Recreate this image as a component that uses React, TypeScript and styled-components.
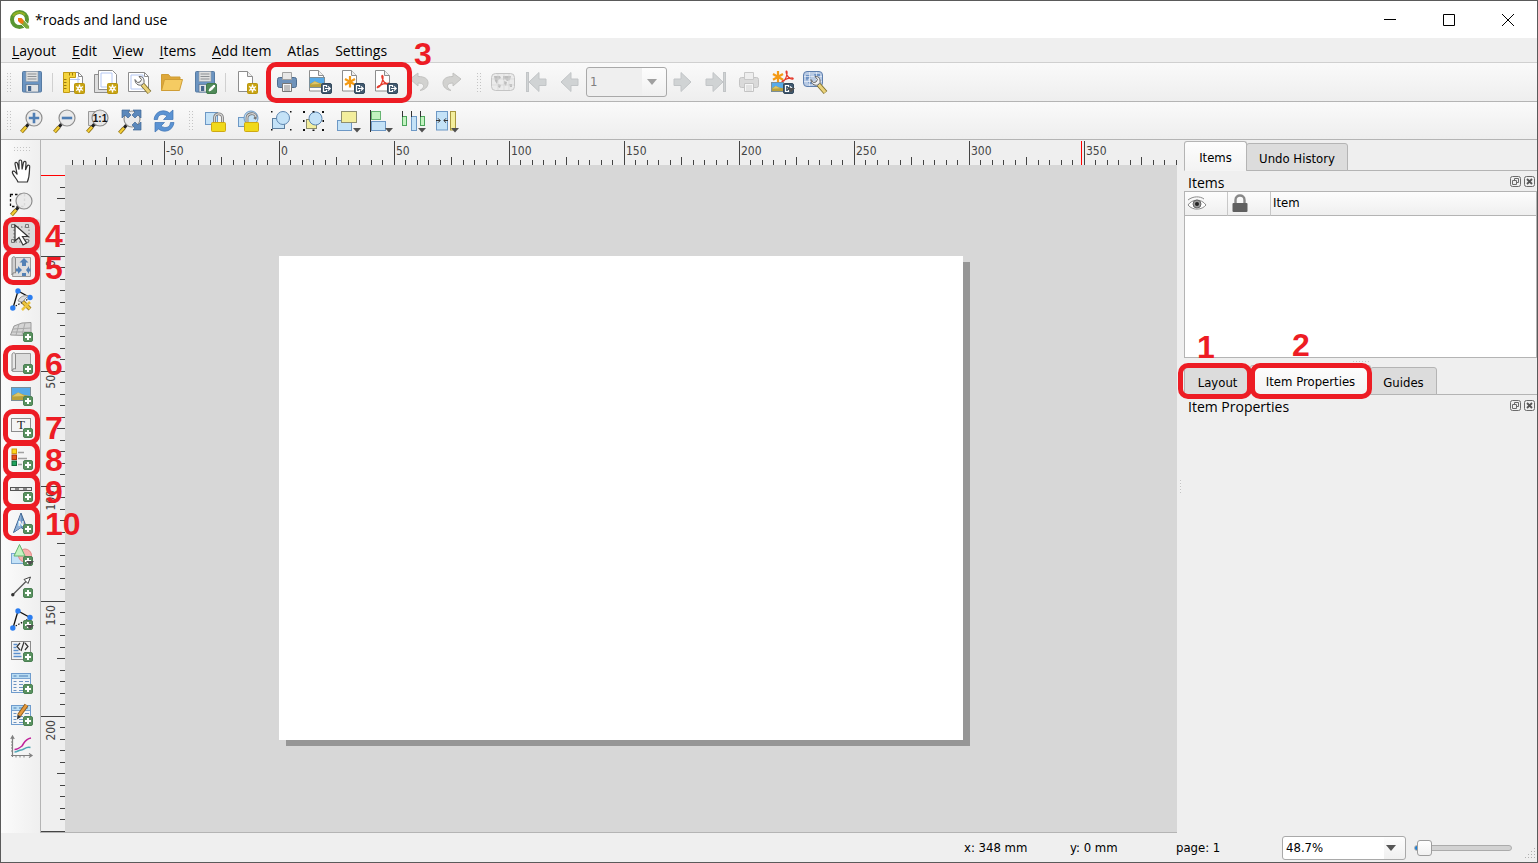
import React, { useLayoutEffect, useRef, useState } from "react";
import styled, { createGlobalStyle, css } from "styled-components";

const UI = `"Open Sans", "Noto Sans", sans-serif`;
const SMALL = `"DejaVu Sans Condensed", "DejaVu Sans", sans-serif`;
const RED = "#ed1c24";
const LINE = "#b4b4b4";

const Global = createGlobalStyle`
  *, *::before, *::after { box-sizing: border-box; }
  body { margin: 0; background: #efefef; color: #000; font-family: ${UI}; font-size: 14px; }
  button, select, input { font: inherit; color: inherit; margin: 0; }
`;

/* ---------- window frame ---------- */

const Window = styled.div`
  display: flex;
  flex-direction: column;
  height: 100vh;
  min-height: 800px;
  border: 1px solid #5a5a5a;
  background: #efefef;
  overflow: hidden;
`;

const TitleBar = styled.header`
  display: flex;
  align-items: center;
  flex: none;
  height: 37px;
  padding-left: 9px;
  background: #fff;
`;

const Title = styled.h1`
  flex: 1;
  margin: 0 0 0 5px;
  font-size: 14px;
  font-weight: 400;
  line-height: 20px;
`;

const CaptionButton = styled.button`
  display: grid;
  place-items: center;
  width: 59px;
  height: 36px;
  padding: 0;
  border: 0;
  background: transparent;
`;

const MenuBar = styled.nav`
  display: flex;
  align-items: center;
  flex: none;
  gap: 16px;
  height: 25px;
  padding: 2px 0 0 11px;
  border-bottom: 1px solid #d0d0d0;
`;

const MenuButton = styled.button`
  padding: 0;
  border: 0;
  background: transparent;
  line-height: 20px;
`;

const Mnemonic = styled.span`
  text-decoration: underline;
  text-underline-offset: 2px;
`;

/* ---------- toolbars ---------- */

const Toolbar = styled.div<{ $height: number }>`
  display: flex;
  align-items: center;
  flex: none;
  height: ${(p) => p.$height}px;
  border-bottom: 1px solid ${LINE};
  background: linear-gradient(#fafafa, #eeeeee);
`;

const dots = css`
  background-image: linear-gradient(#f4f4f4 2px, transparent 2px), linear-gradient(90deg, #c4c4c4 1px, transparent 1px);
  background-position: 0 1px, 0 0;
  background-size: 3px 3px;
`;

const Handle = styled.span<{ $first?: boolean }>`
  flex: none;
  width: ${(p) => (p.$first ? 4 : 5)}px;
  height: 19px;
  margin: ${(p) => (p.$first ? "0 5px 0 6px" : "0 5px 0 8px")};
  ${dots}
`;

const Separator = styled.span`
  flex: none;
  width: 1px;
  height: 19px;
  margin: 0 4px 0 3px;
  background: #d0d0d0;
`;

const ToolButton = styled.button<{ $vertical?: boolean; $pressed?: boolean }>`
  position: relative;
  display: flex;
  align-items: center;
  flex: none;
  width: ${(p) => (p.$vertical ? 36 : 33)}px;
  height: ${(p) => (p.$vertical ? 32 : 34)}px;
  padding: 0 0 0 ${(p) => (p.$vertical ? 6 : 4)}px;
  border: 0;
  border-radius: 3px;
  background: ${(p) => (p.$pressed ? "#dadada" : "transparent")};
`;

const Svg = styled.svg`
  display: block;
  flex: none;
  overflow: visible;
`;

const MarkedGroup = styled.div`
  position: relative;
  display: flex;
`;

const Ring = styled.span<{ $x: number; $y: number; $w: number; $h: number }>`
  position: absolute;
  z-index: 3;
  left: ${(p) => p.$x}px;
  top: ${(p) => p.$y}px;
  width: ${(p) => p.$w}px;
  height: ${(p) => p.$h}px;
  border: 5px solid ${RED};
  border-radius: 10px;
  pointer-events: none;
`;

const Digit = styled.span<{ $x: number; $y: number }>`
  position: absolute;
  z-index: 4;
  left: ${(p) => p.$x}px;
  top: ${(p) => p.$y}px;
  color: ${RED};
  font: 700 32px/32px "Liberation Sans", Arial, sans-serif;
  pointer-events: none;
`;

const Combo = styled.span<{ $width: number; $height: number }>`
  position: relative;
  display: flex;
  flex: none;
  width: ${(p) => p.$width}px;
  height: ${(p) => p.$height}px;
`;

const Select = styled.select<{ $fill: string; $arrow: number }>`
  appearance: none;
  width: 100%;
  padding: 0 0 0 3px;
  border: 1px solid #a9a9a9;
  border-radius: 3px;
  background: linear-gradient(90deg, ${(p) => p.$fill}, ${(p) => p.$fill}) no-repeat left / calc(100% - ${(p) => p.$arrow}px) 100%,
    linear-gradient(#fdfdfd, #f0f0f0);
  font: 13px/16px ${SMALL};
  opacity: 1;
  &:disabled { color: #808080; }
`;

const ComboArrow = styled.svg`
  position: absolute;
  right: 10px;
  top: calc(50% - 3px);
  pointer-events: none;
`;

/* ---------- work area ---------- */

const Work = styled.div`
  display: flex;
  flex: 1;
  min-height: 0;
`;

const SideBar = styled.div`
  position: relative;
  z-index: 2;
  display: flex;
  flex-direction: column;
  flex: none;
  width: 40px;
  padding: 7px 0 0 3px;
  border-right: 1px solid ${LINE};
  background: linear-gradient(90deg, #fbfbfb, #efefef);
`;

const SideHandle = styled.span`
  width: 16px;
  height: 4px;
  margin: 0 0 4px 10px;
  ${dots}
`;

const Center = styled.main`
  display: grid;
  flex: 1;
  min-width: 0;
  grid-template: 25px 1fr / 24px 1fr;
  border-bottom: 1px solid ${LINE};
`;

const RulerBox = styled.div<{ $across?: boolean }>`
  grid-column: ${(p) => (p.$across ? "1 / 3" : "1")};
  overflow: hidden;
  min-height: 0;
`;

const RulerSvg = styled.svg`
  display: block;
  width: 100%;
  height: 100%;
  font: 12px ${SMALL};
  fill: #444;
  shape-rendering: crispEdges;
`;

const Canvas = styled.section`
  min-width: 0;
  padding: 91px 0 0 214px;
  background: #d7d7d7;
  overflow: hidden;
`;

const Paper = styled.div`
  width: 684px;
  height: 484px;
  background: #fff;
  box-shadow: 7px 6px 0 #969696;
`;

/* ---------- docks ---------- */

const Gutter = styled.div`
  display: flex;
  align-items: center;
  justify-content: center;
  flex: none;
  width: 7px;
`;

const GutterDots = styled.span`
  width: 1px;
  height: 13px;
  ${dots}
`;

const Docks = styled.aside`
  display: flex;
  flex-direction: column;
  flex: none;
  width: 353px;
  padding-top: 1px;
`;

const TabBar = styled.div`
  display: flex;
  align-items: flex-end;
  flex: none;
  height: 30px;
  border-bottom: 1px solid ${LINE};
`;

const Tab = styled.button<{ $width: number; $active?: boolean }>`
  position: relative;
  flex: none;
  width: ${(p) => p.$width}px;
  height: ${(p) => (p.$active ? 30 : 28)}px;
  margin-bottom: -1px;
  padding: 3px 0 0;
  border: 1px solid ${LINE};
  border-bottom-color: ${(p) => (p.$active ? "#f4f4f4" : LINE)};
  border-radius: 3px 3px 0 0;
  background: ${(p) => (p.$active ? "linear-gradient(#fdfdfd, #f3f3f3)" : "#dcdcdc")};
  font: 13px/16px ${SMALL};
  white-space: nowrap;
  & + & { margin-left: -1px; }
`;

const DockTitle = styled.div`
  display: flex;
  align-items: center;
  flex: none;
  gap: 2px;
  height: 20px;
  padding: 3px 1px 0 4px;
`;

const DockName = styled.h2`
  flex: 1;
  margin: 0;
  font-size: 14px;
  font-weight: 400;
  line-height: 18px;
`;

const DockButton = styled.button`
  width: 12px;
  height: 12px;
  padding: 0;
  margin-bottom: 1px;
  border: 0;
  background: transparent;
`;

const ItemsView = styled.div`
  flex: none;
  height: 167px;
  border: 1px solid ${LINE};
  background: #fff;
`;

const ItemsTable = styled.table`
  width: 100%;
  table-layout: fixed;
  border-collapse: separate;
  border-spacing: 0;
`;

const Th = styled.th<{ $width?: number }>`
  width: ${(p) => (p.$width ? p.$width + "px" : "auto")};
  height: 24px;
  padding: 0 0 2px 2px;
  border-right: ${(p) => (p.$width ? "1px solid #c8c8c8" : "0")};
  border-bottom: 1px solid ${LINE};
  background: linear-gradient(#fdfdfd, #efefef);
  font: 13px/16px ${SMALL};
  text-align: left;
`;

const Splitter = styled.div`
  display: flex;
  justify-content: center;
  align-items: center;
  flex: none;
  height: 7px;
`;

const SplitterDots = styled.span`
  width: 16px;
  height: 1px;
  ${dots}
`;

/* ---------- status bar ---------- */

const StatusBar = styled.footer`
  display: flex;
  align-items: center;
  justify-content: flex-end;
  flex: none;
  height: 29px;
  font: 13px/16px ${SMALL};
`;

const Readout = styled.output`
  width: 106px;
`;

const Slider = styled.input`
  appearance: none;
  width: 98px;
  height: 17px;
  margin: 0 13px 0 8px;
  background: transparent;
  &::-webkit-slider-runnable-track {
    height: 6px;
    border: 1px solid #ababab;
    border-radius: 3px;
    background: linear-gradient(90deg, #1c7fd6 0 6px, #d2d2d2 6px);
  }
  &::-webkit-slider-thumb {
    appearance: none;
    width: 15px;
    height: 16px;
    margin-top: -6px;
    border: 1px solid #9d9d9d;
    border-radius: 3px;
    background: linear-gradient(#fff, #f1f1f1);
  }
`;

const Grip = styled.svg`
  align-self: flex-end;
  margin-bottom: 2px;
`;

/* ---------- shared icon parts ---------- */

const Plus = () => (
  <g>
    <rect x="13.5" y="13.5" width="9" height="9" rx="1.500" fill="#5a9260" stroke="#4b8053" />
    <path d="M18 15v6M15 18h6" stroke="#fff" strokeWidth="2" />
  </g>
);
const Star = () => (
  <g>
    <rect x="13.500" y="13.500" width="10" height="10" rx="1" fill="#c9a412" stroke="#b8950c" />
    <path d="M18.500 14.500v8M15 16.500l7 4M22 16.500l-7 4" stroke="#fff" strokeWidth="1.400" />
    <circle cx="18.500" cy="18.500" r="2.200" fill="#fff" />
    <circle cx="18.500" cy="18.500" r=".8" fill="#c9a412" />
  </g>
);
const Export = () => (
  <g>
    <rect x="13.500" y="13.500" width="10" height="10" rx="1.500" fill="#41596f" stroke="#34495c" />
    <path d="M18.500 15.500h-3v6h3M17 18.500h5M20 16.300l2.200 2.200-2.200 2.200M18.500 15v2M18.500 20v2" fill="none" stroke="#fff" strokeWidth="1.200" />
  </g>
);
const Drop = ({ x = 18, y = 19 }) => <path d={`M${x} ${y}h8l-4 4.500z`} fill="#505050" />;
const Sheet = () => (
  <g>
    <path d="M4.500 1.500h9l5 5v15h-14z" fill="#fff" stroke="#8d8d8d" />
    <path d="M13.500 1.500v5h5" fill="#eee" stroke="#8d8d8d" />
  </g>
);
const ExportSheet = () => (
  <g>
    <path d="M1.500.5h9l5 5v15.500h-14z" fill="#fff" stroke="#8d8d8d" />
    <path d="M10.500.5v5h5" fill="#eee" stroke="#8d8d8d" />
  </g>
);
const Disk = () => (
  <g>
    <rect x="2.500" y="1.500" width="19" height="20.500" rx="1" fill="#6b94c1" stroke="#567ba3" />
    <rect x="6" y="1.500" width="12" height="10" fill="#dfe0e0" stroke="#8f9aa5" strokeWidth=".6" />
    <path d="M7.500 4h9M7.500 6.500h9M7.500 9h9" stroke="#8b8f93" />
    <rect x="6" y="14.500" width="12.500" height="7.500" fill="#e2e4e6" stroke="#59738f" strokeWidth=".7" />
    <rect x="8" y="16" width="3.200" height="5" fill="#46668c" />
  </g>
);
const Lens = ({ cx = 14, cy = 9 }) => (
  <g>
    <path d={`M${cx - 5.500} ${cy + 6}L${cx - 8} ${cy + 9}`} stroke="#222" strokeWidth="3" />
    <path d={`M${cx - 8} ${cy + 9}L${cx - 12.500} ${cy + 14}`} stroke="#8c6d10" strokeWidth="3.800" />
    <path d={`M${cx - 8} ${cy + 9}L${cx - 12.300} ${cy + 13.700}`} stroke="#f2cd35" strokeWidth="2.200" />
    <circle cx={cx} cy={cy} r="8" fill="#e8e8e8" fillOpacity=".93" stroke="#8e8e8e" strokeWidth="1.200" />
  </g>
);
const Wrench = () => (
  <g>
    <path d="M15.500 14.500l7 8" stroke="#80702c" strokeWidth="4.800" />
    <path d="M15.500 14.500l6.700 7.700" stroke="#ead27a" strokeWidth="3" />
    <path d="M8 9.500c0 4 3 6.500 7 5.500l2-2.500c.5-4-1.500-6.500-5-6l2.500 3-1.500 2.500-2.500.500z" fill="#f1f1f1" stroke="#666" />
  </g>
);
const Printer = ({ off = false }) => (
  <g stroke={off ? "#c4c4c4" : "#4d6c8e"}>
    <rect x="2.500" y="7.500" width="19" height="10" rx="2" fill={off ? "#dadada" : "#6e92ba"} />
    <path d="M7.500 9.500v-7h9v7z" fill={off ? "#eeeeee" : "#e7e7e7"} stroke={off ? "#c8c8c8" : "#a1a1a1"} />
    <path d="M7.500 13.500h9v8h-9z" fill="#f6f6f6" stroke={off ? "#c4c4c4" : "#777"} />
    <path d="M9 16h6M9 18h6M9 20h6" stroke={off ? "#d0d0d0" : "#8a8a8a"} />
  </g>
);
const Pdf = () => (
  <path d="M4 17.500c3-1 5.500-8 5-11-.4-1.700-1.600-1-1 1 1 4 3.500 6.500 6.500 7 2 .2 1.500-1.500-.5-1.400-3 0-6.500 1.200-9.500 3-1.500 1-1.500 1.900-.5 1.400z" fill="none" stroke="#e53a2c" strokeWidth="1.300" />
);
const Asterisk = () => (
  <path d="M9 6v11.500M4 9l10 5.700M14 9L4 14.700" stroke="#f49a15" strokeWidth="2.200" />
);
const Picture = ({ x = 1.500, y = 4.500, w = 19, h = 13 }) => (
  <g>
    <rect x={x} y={y} width={w} height={h} fill="#57aae8" stroke="#7b8e98" />
    <path d={`M${x + 0.500} ${y + h * 0.620}L${x + w * 0.350} ${y + h * 0.380}L${x + w * 0.650} ${y + h * 0.550}L${x + w - 0.500} ${y + h * 0.650}V${y + h - 0.500}H${x + 0.500}z`} fill="#b9a13c" />
    <path d={`M${x + 1} ${y + h * 0.700}L${x + w * 0.350} ${y + h * 0.380}L${x + w * 0.700} ${y + h * 0.650}z`} fill="#ddc667" />
  </g>
);
const Corners = () => (
  <path d="M1 2h2v2H1zM20 2h2v2h-2zM1 20h2v2H1zM20 20h2v2h-2zM10.500 2h2v1.500h-2zM1 11h1.500v2H1zM20.500 11H22v2h-1.500zM10.500 20.500h2V22h-2z" fill="#111" />
);
const Left = ({ bar = false }) => (
  <g fill="#d0d3d4" stroke="#c2c5c7">
    <path d="M4 12l10-9.500v6.500h7v6.500h-7v6z" transform={bar ? "translate(1 0)" : undefined} />
    {bar && <rect x="2.500" y="2.500" width="2" height="19" />}
  </g>
);
const Flip = ({ children }: { children: React.ReactNode }) => <g transform="translate(24 0) scale(-1 1)">{children}</g>;
const UndoArrow = () => (
  <path d="M3 9l8-6v3.500c7 0 10 2.500 10 6.500 0 4-3.500 7-8 7.500 3-2 4-3.500 3.500-5-.5-1.800-2.500-2.500-5.500-2.500v3z" fill="#d2d2d0" stroke="#c2c2c0" />
);
const Lock = ({ open = false }) => (
  <g>
    <path d={open ? "M11 14V9c0-5 8.500-6 9-1M20 8l-1.500 2" : "M11.500 14V9c0-5.500 8-5.500 8 0v5"} fill="none" stroke="#777" strokeWidth="2.800" />
    <path d={open ? "M11 14V9c0-5 8.500-6 9-1" : "M11.500 14V9c0-5.500 8-5.500 8 0v5"} fill="none" stroke="#d8d8d8" strokeWidth="1.200" />
    <rect x="8.500" y="13.500" width="14" height="9" rx="1" fill="#f0d91b" stroke="#cfa912" />
  </g>
);
const TableBase = () => (
  <g>
    <rect x="1.500" y="2.500" width="19" height="19" fill="#f3f5f7" stroke="#6f9ccd" />
    <rect x="2" y="3" width="18" height="4" fill="#b8dcf3" />
    <path d="M3.500 5h3M9 5h9" stroke="#4e7fb5" />
    <path d="M2 7.500h18" stroke="#7aa3d0" />
    <path d="M3.500 10.500h3M9 10.500h4M15 10.500h4M3.500 13.500h3M9 13.500h4M15 13.500h4M3.500 16.500h3M9 16.500h4M3.500 19.500h3M9 19.500h4" stroke="#6c93c0" />
  </g>
);
const NodeShape = () => (
  <g>
    <path d="M3 21L8 4l12 6.500" fill="none" stroke="#111" strokeWidth="1.300" />
    <path d="M3 20.500L20 11" stroke="#111" strokeWidth="1.200" strokeDasharray="1.500 1.500" />
    <circle cx="8" cy="4" r="2.700" fill="#2b7df0" />
    <circle cx="20" cy="10.500" r="2.700" fill="#2b7df0" />
    <circle cx="2.800" cy="21" r="2.700" fill="#2b7df0" />
  </g>
);

const icons: Record<string, React.ReactNode> = {
  save: <Disk />,
  newLayout: (
    <g>
      <path d="M2.500 2.500h15l4 4v15h-19z" fill="#fff" stroke="#8d8d8d" />
      <path d="M17.500 2.500v4h4" fill="none" stroke="#8d8d8d" />
      <path d="M17 7v11M8 9.500h11" stroke="#b5c8f4" />
      <path d="M2.500 2.500h12v5h-6v15h-6z" fill="#f4d33d" stroke="#c29b12" />
      <path d="M3 9.500h2.500M3 12.500h2.500M3 15.500h2.500M3 18.500h2.500M8.500 3v2.500M11.500 3v2.500" stroke="#9b7a10" />
      <Star />
    </g>
  ),
  duplicate: (
    <g>
      <path d="M.5 4.500h16v18H.5z" fill="#dedede" stroke="#8d8d8d" />
      <path d="M4.500.5h14l4 4v15h-18z" fill="#fff" stroke="#8d8d8d" />
      <path d="M7 3h11v14H7z" fill="none" stroke="#b5c8f4" />
      <Star />
    </g>
  ),
  manager: (
    <g>
      <path d="M1.500 2.500h16l4 4v15h-20z" fill="#fff" stroke="#8d8d8d" />
      <path d="M17.500 2.500v4h4" fill="none" stroke="#8d8d8d" />
      <path d="M4 5h12v14H4z" fill="none" stroke="#b5c8f4" />
      <Wrench />
    </g>
  ),
  folder: (
    <g stroke="#cf9d35">
      <path d="M1.500 20.500v-16h7l2 2.500h9.500v4" fill="#dea83a" />
      <path d="M1.500 20.500l3-11h18l-3 11z" fill="#f5cb62" />
    </g>
  ),
  saveAs: (
    <g>
      <Disk />
      <rect x="13.500" y="13.500" width="10" height="10" rx="1.500" fill="#4f8a58" stroke="#437a4c" />
      <path d="M16 21l1-2.500 4-3.500 1 1-3.500 4z" fill="#fff" stroke="#fff" />
    </g>
  ),
  addPage: (
    <g>
      <Sheet />
      <Star />
    </g>
  ),
  print: <Printer />,
  exportImage: (
    <g>
      <ExportSheet />
      <Picture x={1.500} y={7.500} w={15} h={10} />
      <Export />
    </g>
  ),
  exportSvg: (
    <g>
      <ExportSheet />
      <Asterisk />
      <Export />
    </g>
  ),
  exportPdf: (
    <g>
      <ExportSheet />
      <Pdf />
      <Export />
    </g>
  ),
  undo: <UndoArrow />,
  redo: (
    <Flip>
      <UndoArrow />
    </Flip>
  ),
  atlas: (
    <g>
      <rect x=".5" y="3.500" width="23" height="17" rx="4" fill="#ebebeb" stroke="#c4c4c4" />
      <path d="M3 6h6l1 2-3 2-1 4-2-3zM12 6h8l-1 4-3 1-2-2-2 1zM7 14l3 1-1 3-2-1zM13 11l3 1-1 4-2-2zM18 14h3v3h-2z" fill="#bdbdbd" />
      <path d="M1 9h22M1 15h22M7 4v16M13 4v16M18 4v16" stroke="#d6d6d6" strokeWidth=".7" />
    </g>
  ),
  first: <Left bar />,
  prev: <Left />,
  next: (
    <Flip>
      <Left />
    </Flip>
  ),
  last: (
    <Flip>
      <Left bar />
    </Flip>
  ),
  printAtlas: <Printer off />,
  exportAtlas: (
    <g>
      <g transform="translate(-1 -5)">
        <Asterisk />
      </g>
      <g transform="translate(9 -4) scale(.9)">
        <Pdf />
      </g>
      <Picture x={1.500} y={12.500} w={12} h={9} />
      <Export />
      <Drop x={17} y={18} />
    </g>
  ),
  atlasSettings: (
    <g>
      <rect x=".5" y="1.500" width="19" height="15" rx="3.500" fill="#b9cbe4" stroke="#5e7fae" />
      <path d="M3 5h4l1 2-3 2-1 2-1-2zM11 4h6v3l-3 2-2-2zM5 12h4v2H6z" fill="#6f93c4" />
      <path d="M1 6.500h18M1 11.500h18M6.500 2v14M13.500 2v14" stroke="#ebf1f9" strokeWidth=".7" />
      <Wrench />
    </g>
  ),
  zoomIn: (
    <g>
      <Lens />
      <path d="M14 3.800v10.400M8.800 9h10.400" stroke="#4f7eb4" strokeWidth="2.600" />
    </g>
  ),
  zoomOut: (
    <g>
      <Lens />
      <path d="M8.800 9h10.400" stroke="#4f7eb4" strokeWidth="2.600" />
    </g>
  ),
  zoomActual: (
    <g>
      <path d="M2.500 2.500h13v14h-13z" fill="#e3e3e3" stroke="#999" />
      <Lens />
      <text x="14" y="13" textAnchor="middle" fontFamily="Liberation Sans, sans-serif" fontWeight="700" fontSize="10" fill="#111">
        1:1
      </text>
    </g>
  ),
  zoomFull: (
    <g>
      <Lens cx={13} cy={10} />
      <g fill="#5b88bb" stroke="#3f6796" strokeWidth=".7">
        <path d="M3 1h8L9 3l3 3-3 3-3-3-3 3z" />
        <path d="M22 1h-8l2 2-3 3 3 3 3-3 3 3z" />
        <path d="M22 21h-8l2-2-3-3 3-3 3 3 3-3z" />
      </g>
    </g>
  ),
  refresh: (
    <g fill="#5b93d3" stroke="#3d73b3" strokeWidth=".7">
      <path d="M2 10.500C3 2 12-.5 17.500 4L21 1v9.500h-9.500L15 7C10.500 4 6 5.500 5.500 10.500z" />
      <path d="M22 13.500C21 22 12 24.500 6.500 20L3 23v-9.500h9.500L9 17c4.500 3 9 1.500 9.500-3.500z" />
    </g>
  ),
  lock: (
    <g>
      <rect x="2.500" y="3.500" width="12" height="12" fill="#c4e2f7" stroke="#6d98c5" />
      <Lock />
    </g>
  ),
  unlock: (
    <g>
      <rect x="2.500" y="8.500" width="13" height="9" fill="#c4e2f7" stroke="#6d98c5" />
      <circle cx="15" cy="9" r="7" fill="#c4e2f7" stroke="#6d98c5" />
      <Lock open />
    </g>
  ),
  group: (
    <g>
      <rect x="3.500" y="9.500" width="12" height="10" fill="#c4e2f7" stroke="#5d7f9f" />
      <circle cx="14" cy="9" r="6.500" fill="#c4e2f7" stroke="#5d86b0" />
      <path d="M2 2h1.500v1.500H2zM21 2h1.500v1.500H21zM2 20h1.500v1.500H2zM21 20h1.500v1.500H21z" fill="#111" />
    </g>
  ),
  ungroup: (
    <g>
      <rect x="4.500" y="10.500" width="10" height="9" fill="#f3ee9d" stroke="#8a8a6a" />
      <circle cx="13.500" cy="9.500" r="6.500" fill="#c4e2f7" stroke="#5d86b0" />
      <Corners />
    </g>
  ),
  raise: (
    <g>
      <rect x="2.500" y="11.500" width="14" height="10" fill="#c4e2f7" stroke="#6d98c5" />
      <rect x="6.500" y="2.500" width="15" height="11" fill="#f3ee9d" stroke="#8f8f70" />
      <Drop />
    </g>
  ),
  align: (
    <g>
      <rect x="3.500" y="2.500" width="9" height="8" fill="#c3f3c0" stroke="#67b572" />
      <rect x="3.500" y="12.500" width="14" height="9" fill="#c4e2f7" stroke="#6d98c5" />
      <path d="M2.500 1v22" stroke="#333" />
      <Drop x={17} />
    </g>
  ),
  distribute: (
    <g>
      <rect x="1.500" y="7.500" width="4" height="9" fill="#c3f3c0" stroke="#4ba45b" />
      <rect x="10.500" y="7.500" width="5" height="14" fill="#c4e2f7" stroke="#6d98c5" />
      <rect x="19.500" y="7.500" width="4" height="9" fill="#c3f3c0" stroke="#4ba45b" />
      <path d="M1.500 2v6M10.500 2v6M19.500 2v6" stroke="#333" />
      <Drop x={17} />
    </g>
  ),
  resize: (
    <g>
      <rect x="2.500" y="2.500" width="11" height="18.500" fill="#c4e2f7" stroke="#6d98c5" />
      <rect x="16.500" y="2.500" width="5" height="18.500" fill="#f3ee9d" stroke="#a8973f" />
      <path d="M2 11.500h4M4 9.300l2.200 2.200L4 13.700M14 11.500h-4M12 9.300l-2.200 2.200 2.200 2.200" fill="none" stroke="#333" />
      <Drop x={17} />
    </g>
  ),
  pan: (
    <path d="M8 23c-1-3-4.500-6-5.500-9-.7-2 1.500-2.500 2.700-1l2 2.500L5 5c-.3-2 2-2.300 2.500-.5l1.500 6V2.500c0-2 2.600-2 2.700 0l.4 8L13.500 3.500c.5-1.700 2.700-1.400 2.500.5l-.5 7 1.700-4c.8-1.500 2.800-.8 2.500.8-.5 4 .3 9.200-2.400 15.200z" fill="#fff" stroke="#333" strokeWidth="1.200" />
  ),
  zoomTool: (
    <g>
      <path d="M.5 3.500h14v12H.5z" fill="none" stroke="#111" strokeWidth="1.300" strokeDasharray="2.500 2" />
      <Lens cx={14} cy={10} />
    </g>
  ),
  select: (
    <g>
      <path d="M4 4h15v15H4z" fill="none" stroke="#777" strokeDasharray="1.500 2" />
      <g fill="none" stroke="#777">
        <path d="M1.500 1.500h3v3h-3zM15.500 1.500h3v3h-3zM1.500 16.500h3v3h-3zM15.500 16.500h3v3h-3z" />
      </g>
      <path d="M5 2v16l4-3.500 4 7.500 3.500-2-4-6.500h5.500z" fill="#fff" stroke="#333" strokeWidth="1.200" />
    </g>
  ),
  moveContent: (
    <g>
      <path d="M5.500 2.500h15v19h-18z" fill="#dedede" stroke="#999" />
      <path d="M2 4c0-3 3.500-3 3.500 0v14c-2-1-3.500.500-3.500 2z" fill="#d0d0d0" stroke="#8a8a8a" />
      <path d="M14 3l4.500 4.500h-2.500V11h-4V7.500H9.500zM6 13.500h2V11l4 4-4 4v-2.500H6zM20.500 13.500h-1.500V11l-3 4 3 4v-2.500h1.500zM12 21v-3h4v3z" fill="#5381b5" />
    </g>
  ),
  editNodes: (
    <g>
      <NodeShape />
      <path d="M20 22l-7-7" stroke="#8b6b16" strokeWidth="4" />
      <path d="M20 22l-7-7M12 23l8-8" stroke="#edc53d" strokeWidth="2.500" />
      <path d="M8 14c2-5 7-6 10-5l-6 6z" fill="#ddd" stroke="#999" />
    </g>
  ),
  add3d: (
    <g>
      <path d="M4 7l8-3 9-.5v16l-7-3-13.500-.5z" fill="#d5d5d5" stroke="#9a9a9a" />
      <path d="M3 10l18-1M2 13l19 0M9 5l-3 11M15 4l-3 12" stroke="#a9a9a9" fill="none" />
      <Plus />
    </g>
  ),
  addMap: (
    <g>
      <path d="M5.500 2.500h15v18h-18z" fill="#dcdcdc" stroke="#999" />
      <path d="M2 4c0-3 3.500-3 3.500 0v14c-2-1-3.500.500-3.500 2z" fill="#e8e8e8" stroke="#8a8a8a" />
      <Plus />
    </g>
  ),
  addPicture: (
    <g>
      <Picture />
      <Plus />
    </g>
  ),
  addLabel: (
    <g>
      <rect x="1.500" y="3.500" width="19" height="13" fill="#f4f4f4" stroke="#8c8c8c" />
      <text x="11" y="14" textAnchor="middle" fontFamily="Liberation Serif, serif" fontSize="13" fill="#222">
        T
      </text>
      <Plus />
    </g>
  ),
  addLegend: (
    <g>
      <rect x="2" y="2" width="4.500" height="4.500" fill="#fdd61b" stroke="#d19a0d" />
      <rect x="2" y="8" width="4.500" height="4.500" fill="#e8541e" stroke="#a9330d" />
      <rect x="2" y="14" width="4.500" height="4.500" fill="#1fa35c" stroke="#12683a" />
      <path d="M8 5.500h6M8 11.500h9M8 17.500h4" stroke="#a0a0a0" strokeWidth="1.600" />
      <Plus />
    </g>
  ),
  addScale: (
    <g>
      <rect x=".5" y="8.500" width="21" height="3" fill="#e8e8e8" stroke="#555" />
      <path d="M5 10h4M13 10h4" stroke="#888" strokeWidth="2" />
      <Plus />
    </g>
  ),
  addNorth: (
    <g>
      <path d="M11 2L3.500 21.500l7.500-5 7.500 5z" fill="#6c94c2" stroke="#3e638f" />
      <path d="M11 3v13.500L4.500 20.500z" fill="#8fb0d6" />
      <text x="11" y="15" textAnchor="middle" fontFamily="Liberation Sans, sans-serif" fontWeight="700" fontSize="8" fill="#fff">
        N
      </text>
      <Plus />
    </g>
  ),
  addShape: (
    <g>
      <rect x="1.500" y="10.500" width="13" height="10" fill="#c4e2f7" stroke="#7ba6d0" />
      <circle cx="15" cy="12.500" r="6.500" fill="#f7b3b0" stroke="#e58683" />
      <path d="M9.500 1.500L15 13H4z" fill="#c3f3c0" stroke="#62b56e" />
      <Plus />
      <Drop x={16} y={18} />
    </g>
  ),
  addArrow: (
    <g>
      <path d="M3 19.500L17 5.500" stroke="#555" strokeWidth="1.200" />
      <path d="M20.500 2l-6.500 2.500 4 4z" fill="#fff" stroke="#444" />
      <circle cx="2.800" cy="19.800" r="1.700" fill="#333" />
      <Plus />
    </g>
  ),
  addNode: (
    <g>
      <NodeShape />
      <Plus />
      <Drop x={16} y={18} />
    </g>
  ),
  addHtml: (
    <g>
      <rect x="1.500" y="2.500" width="19" height="18" fill="#f5f5f5" stroke="#8c8c8c" />
      <path d="M3.500 5.500h4M3.500 8.500h3M3.500 11.500h5M3.500 14.500h7M3.500 17.500h8M14 14.500h4" stroke="#5b8fcc" strokeWidth="1.700" />
      <path d="M10 4L7 7.500l3 3.500M15 4l3 3.500-3 3.500M14 3l-3 9" fill="none" stroke="#333" strokeWidth="1.200" />
      <Plus />
    </g>
  ),
  addTable: (
    <g>
      <TableBase />
      <Plus />
    </g>
  ),
  addFixed: (
    <g>
      <TableBase />
      <path d="M16.500 2L9 12.500" stroke="#8c5a1c" strokeWidth="4.400" />
      <path d="M16.500 2L9 12.500" stroke="#e79a3c" strokeWidth="2.600" />
      <path d="M7.500 11.500L7 16.500l4-2.500z" fill="#333" />
      <Plus />
    </g>
  ),
  addProfile: (
    <g>
      <path d="M2.500 22V2M1 20.500h20M.8 4L2.500 1l1.700 3M19 18.500l3 2-3 2" fill="none" stroke="#808080" strokeWidth="1.200" />
      <path d="M1 7h1M1 10h1M1 13h1M1 16h1M6 21v1.500M10 21v1.500M14 21v1.500" stroke="#808080" />
      <path d="M4.500 17c3 0 4-2 7-2 3 0 4-4 9-2.500" fill="none" stroke="#4ea7b5" strokeWidth="1.500" />
      <path d="M4.500 14.500c3 0 5-1.500 7.500-3.500C14.500 7.500 15 4 21 3" fill="none" stroke="#c0229a" strokeWidth="1.600" />
    </g>
  ),
};

const Icon = ({ name }: { name: string }) => (
  <Svg width="24" height="24" viewBox="0 0 24 24" fill="none" aria-hidden="true">
    {icons[name]}
  </Svg>
);

const Tool = ({ name, label, disabled }: { name: string; label: string; disabled?: boolean }) => (
  <ToolButton aria-label={label} disabled={disabled}>
    <Icon name={name} />
  </ToolButton>
);

const sideTools: { name: string; label: string; mark?: string }[] = [
  { name: "pan", label: "Pan layout" },
  { name: "zoomTool", label: "Zoom" },
  { name: "select", label: "Select or move item", mark: "4" },
  { name: "moveContent", label: "Move item content", mark: "5" },
  { name: "editNodes", label: "Edit nodes" },
  { name: "add3d", label: "Add 3D map" },
  { name: "addMap", label: "Add map", mark: "6" },
  { name: "addPicture", label: "Add picture" },
  { name: "addLabel", label: "Add label", mark: "7" },
  { name: "addLegend", label: "Add legend", mark: "8" },
  { name: "addScale", label: "Add scale bar", mark: "9" },
  { name: "addNorth", label: "Add north arrow", mark: "10" },
  { name: "addShape", label: "Add shape" },
  { name: "addArrow", label: "Add arrow" },
  { name: "addNode", label: "Add node item" },
  { name: "addHtml", label: "Add HTML" },
  { name: "addTable", label: "Add attribute table" },
  { name: "addFixed", label: "Add fixed table" },
  { name: "addProfile", label: "Add elevation profile" },
];

/* ---------- rulers ---------- */

const PX_PER_MM = 2.3;
const LABEL_ROOM = 26;

function Ruler({ vertical, origin, cursor, first }: { vertical?: boolean; origin: number; cursor: number; first: number }) {
  const box = useRef<SVGSVGElement>(null);
  const [length, setLength] = useState(0);

  useLayoutEffect(() => {
    const el = box.current;
    if (!el) return;
    const measure = () => {
      const r = el.getBoundingClientRect();
      setLength(vertical ? r.height : r.width);
    };
    measure();
    const observer = new ResizeObserver(measure);
    observer.observe(el);
    return () => observer.disconnect();
  }, [vertical]);

  const marks: React.ReactNode[] = [];
  for (let mm = first; origin + mm * PX_PER_MM < length; mm += 5) {
    const at = Math.floor(origin + mm * PX_PER_MM + 0.01);
    const major = mm % 50 === 0;
    const len = major ? 24 : mm % 25 === 0 ? 8 : 5;
    marks.push(
      vertical ? (
        <rect key={mm} x={24 - len} y={at} width={len} height={1} />
      ) : (
        <rect key={mm} x={at} y={25 - len} width={1} height={len} />
      ),
    );
    if (major && at + LABEL_ROOM < length) {
      marks.push(
        vertical ? (
          <text key={"t" + mm} transform={`translate(14 ${at + 4}) rotate(-90)`} textAnchor="end">
            {mm}
          </text>
        ) : (
          <text key={"t" + mm} x={at + 2} y={15}>
            {mm}
          </text>
        ),
      );
    }
  }
  return (
    <RulerSvg ref={box}>
      {marks}
      {vertical ? <rect y={cursor} width={24} height={1} fill="#f00" /> : <rect x={cursor} y={1} width={1} height={24} fill="#f00" />}
    </RulerSvg>
  );
}

const DockControls = () => (
  <>
    <DockButton aria-label="Float panel">
      <Svg width="12" height="12" fill="none" stroke="#6b6b6b">
        <rect x=".5" y=".5" width="10" height="10" rx="2" />
        <path d="M4.500 4.500v-2h4v4h-2M2.500 4.500h4v4h-4z" />
      </Svg>
    </DockButton>
    <DockButton aria-label="Close panel">
      <Svg width="12" height="12" fill="none" stroke="#6b6b6b">
        <rect x=".5" y=".5" width="10" height="10" rx="2" />
        <path d="M3 3l5 5M8 3l-5 5" stroke="#555" strokeWidth="1.800" />
      </Svg>
    </DockButton>
  </>
);

const menus = [
  ["Layout", true],
  ["Edit", true],
  ["View", true],
  ["Items", true],
  ["Add Item", true],
  ["Atlas", false],
  ["Settings", false],
] as const;

export default function App() {
  return (
    <Window>
      <Global />
      <TitleBar>
        <Svg width="20" height="20" viewBox="0 0 20 20" fill="none" aria-hidden="true">
          <circle cx="9.500" cy="9.500" r="7.500" stroke="#589632" strokeWidth="4" />
          <path d="M3 6a7.500 7.500 0 0 1 12-1" stroke="#93b023" strokeWidth="2" />
          <path d="M10 10h4l5.500 6v3H16l-6-6z" fill="#7aa93c" stroke="#fff" strokeWidth=".8" />
          <path d="M8 8h3.500l2 2v3.500h-3L8 11z" fill="#ee7913" />
        </Svg>
        <Title>*roads and land use</Title>
        <CaptionButton aria-label="Minimize">
          <Svg width="12" height="12" stroke="#000">
            <path d="M0 5.500h12" />
          </Svg>
        </CaptionButton>
        <CaptionButton aria-label="Maximize">
          <Svg width="12" height="12" stroke="#000" fill="none">
            <path d="M.5.5h11v11H.5z" />
          </Svg>
        </CaptionButton>
        <CaptionButton aria-label="Close">
          <Svg width="12" height="12" stroke="#000">
            <path d="M0 0l12 12M12 0L0 12" />
          </Svg>
        </CaptionButton>
      </TitleBar>

      <MenuBar aria-label="Main menu">
        {menus.map(([text, key]) => (
          <MenuButton key={text}>
            {key ? (
              <>
                <Mnemonic>{text[0]}</Mnemonic>
                {text.slice(1)}
              </>
            ) : (
              text
            )}
          </MenuButton>
        ))}
      </MenuBar>

      <Toolbar $height={39}>
        <Handle $first />
        <Tool name="save" label="Save project" />
        <Separator />
        <Tool name="newLayout" label="New layout" />
        <Tool name="duplicate" label="Duplicate layout" />
        <Tool name="manager" label="Layout manager" />
        <Tool name="folder" label="Add items from template" />
        <Tool name="saveAs" label="Save as template" />
        <Separator />
        <Tool name="addPage" label="Add pages" />
        <Separator />
        <MarkedGroup>
          <Tool name="print" label="Print" />
          <Tool name="exportImage" label="Export as image" />
          <Tool name="exportSvg" label="Export as SVG" />
          <Tool name="exportPdf" label="Export as PDF" />
          <Ring $x={-5} $y={-3} $w={146} $h={41} />
          <Digit $x={143} $y={-27}>3</Digit>
        </MarkedGroup>
        <Tool name="undo" label="Undo" disabled />
        <Tool name="redo" label="Redo" disabled />
        <Handle />
        <Tool name="atlas" label="Preview atlas" disabled />
        <Tool name="first" label="First feature" disabled />
        <Tool name="prev" label="Previous feature" disabled />
        <Combo $width={81} $height={30}>
          <Select aria-label="Atlas page" disabled $fill="#efefef" $arrow={24}>
            <option>1</option>
          </Select>
          <ComboArrow width="10" height="6">
            <path d="M0 0h10L5 6z" fill="#a0a0a0" />
          </ComboArrow>
        </Combo>
        <Tool name="next" label="Next feature" disabled />
        <Tool name="last" label="Last feature" disabled />
        <Tool name="printAtlas" label="Print atlas" disabled />
        <Tool name="exportAtlas" label="Export atlas" />
        <Tool name="atlasSettings" label="Atlas settings" />
      </Toolbar>

      <Toolbar $height={38}>
        <Handle $first />
        <Tool name="zoomIn" label="Zoom in" />
        <Tool name="zoomOut" label="Zoom out" />
        <Tool name="zoomActual" label="Zoom to 100%" />
        <Tool name="zoomFull" label="Zoom full" />
        <Tool name="refresh" label="Refresh view" />
        <Handle />
        <Tool name="lock" label="Lock selected items" />
        <Tool name="unlock" label="Unlock all items" />
        <Tool name="group" label="Group items" />
        <Tool name="ungroup" label="Ungroup items" />
        <Tool name="raise" label="Raise selected items" />
        <Tool name="align" label="Align selected items" />
        <Tool name="distribute" label="Distribute items" />
        <Tool name="resize" label="Resize items" />
      </Toolbar>

      <Work>
        <SideBar>
          <SideHandle />
          {sideTools.map((t) => (
            <ToolButton key={t.name} aria-label={t.label} $vertical $pressed={t.name === "select"}>
              <Icon name={t.name} />
              {t.mark && (
                <>
                  <Ring $x={-1} $y={-2} $w={37} $h={36} />
                  <Digit $x={41} $y={1}>{t.mark}</Digit>
                </>
              )}
            </ToolButton>
          ))}
        </SideBar>

        <Center>
          <RulerBox $across>
            <Ruler origin={238} cursor={1040} first={-90} />
          </RulerBox>
          <RulerBox>
            <Ruler vertical origin={91} cursor={10} first={-30} />
          </RulerBox>
          <Canvas>
            <Paper />
          </Canvas>
        </Center>

        <Gutter>
          <GutterDots />
        </Gutter>

        <Docks>
          <TabBar role="tablist">
            <Tab role="tab" $width={63} $active>Items</Tab>
            <Tab role="tab" $width={102}>Undo History</Tab>
          </TabBar>
          <DockTitle>
            <DockName>Items</DockName>
            <DockControls />
          </DockTitle>
          <ItemsView>
            <ItemsTable>
              <thead>
                <tr>
                  <Th $width={43} aria-label="Visible">
                    <Svg width="20" height="16" viewBox="0 0 20 16" fill="none" stroke="#8b8b8b">
                      <path d="M1 10c4-6 13-7 18 0-4 5-13 6-18 0z" fill="#fff" />
                      <path d="M1 5c5-4 12-4 16-1" />
                      <circle cx="10" cy="9" r="4" fill="#999" stroke="#666" />
                      <circle cx="10" cy="9" r="2" fill="#222" stroke="none" />
                    </Svg>
                  </Th>
                  <Th $width={43} aria-label="Locked">
                    <Svg width="20" height="18" viewBox="0 0 20 18" fill="none">
                      <path d="M5.500 10V6c0-6 9-6 9 0v4" stroke="#888" strokeWidth="2.400" />
                      <rect x="2.500" y="9" width="15" height="9" rx="1" fill="#606060" />
                    </Svg>
                  </Th>
                  <Th>Item</Th>
                </tr>
              </thead>
            </ItemsTable>
          </ItemsView>
          <Splitter>
            <SplitterDots />
          </Splitter>
          <TabBar role="tablist">
            <Tab role="tab" $width={67}>
              Layout
              <Ring $x={-7} $y={-5} $w={74} $h={36} />
              <Digit $x={12} $y={-37}>1</Digit>
            </Tab>
            <Tab role="tab" $width={121} $active>
              Item Properties
              <Ring $x={-1} $y={-3} $w={122} $h={36} />
              <Digit $x={41} $y={-37}>2</Digit>
            </Tab>
            <Tab role="tab" $width={67}>Guides</Tab>
          </TabBar>
          <DockTitle>
            <DockName>Item Properties</DockName>
            <DockControls />
          </DockTitle>
        </Docks>
      </Work>

      <StatusBar>
        <Readout>x: 348 mm</Readout>
        <Readout>y: 0 mm</Readout>
        <Readout>page: 1</Readout>
        <Combo $width={124} $height={24}>
          <Select aria-label="Zoom level" $fill="#fff" $arrow={21}>
            <option>48.7%</option>
          </Select>
          <ComboArrow width="10" height="6">
            <path d="M0 0h10L5 6z" fill="#555" />
          </ComboArrow>
        </Combo>
        <Slider type="range" aria-label="Zoom" min={0} max={100} defaultValue={3} />
        <Grip width="12" height="12" fill="#b0b0b0">
          <path d="M9 0h1v1H9zM6 3h1v1H6zM9 3h1v1H9zM3 6h1v1H3zM6 6h1v1H6zM9 6h1v1H9zM0 9h1v1H0zM3 9h1v1H3zM6 9h1v1H6zM9 9h1v1H9z" />
        </Grip>
      </StatusBar>
    </Window>
  );
}
